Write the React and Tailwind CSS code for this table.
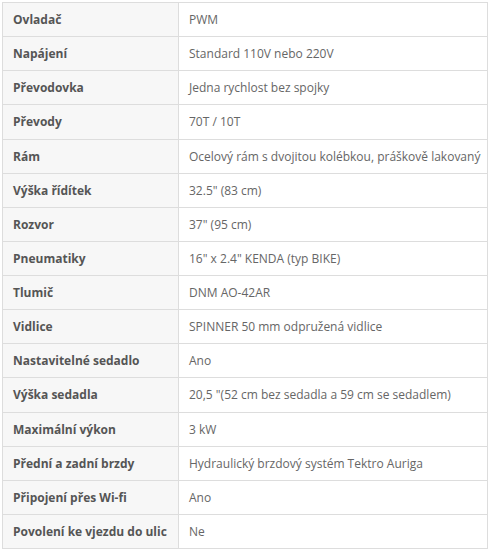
const specs = [
  ["Ovladač", "PWM"],
  ["Napájení", "Standard 110V nebo 220V"],
  ["Převodovka", "Jedna rychlost bez spojky"],
  ["Převody", "70T / 10T"],
  ["Rám", "Ocelový rám s dvojitou kolébkou, práškově lakovaný"],
  ["Výška řídítek", "32.5\" (83 cm)"],
  ["Rozvor", "37\" (95 cm)"],
  ["Pneumatiky", "16\" x 2.4\" KENDA (typ BIKE)"],
  ["Tlumič", "DNM AO-42AR"],
  ["Vidlice", "SPINNER 50 mm odpružená vidlice"],
  ["Nastavitelné sedadlo", "Ano"],
  ["Výška sedadla", "20,5 \"(52 cm bez sedadla a 59 cm se sedadlem)"],
  ["Maximální výkon", "3 kW"],
  ["Přední a zadní brzdy", "Hydraulický brzdový systém Tektro Auriga"],
  ["Připojení přes Wi-fi", "Ano"],
  ["Povolení ke vjezdu do ulic", "Ne"],
];

const App = () => {
  return (
    <div className="w-[491px] h-[552px] bg-white p-[2px] font-['Open_Sans',sans-serif]">
      <table className="w-[486px] table-fixed border-collapse border border-[#dddddd] text-[12px]">
        <tbody>
          {specs.map(([label, value], i) => (
            <tr key={i}>
              <td className="w-[176px] whitespace-nowrap border border-[#dddddd] bg-[#f7f7f7] px-[10px] py-[8px] leading-[17.125px] font-bold text-[#555555]">
                {label}
              </td>
              <td className="whitespace-nowrap border border-[#dddddd] bg-white px-[10px] py-[8px] leading-[17.125px] text-[#666666]">
                {value}
              </td>
            </tr>
          ))}
        </tbody>
      </table>
    </div>
  );
};

export default App;
